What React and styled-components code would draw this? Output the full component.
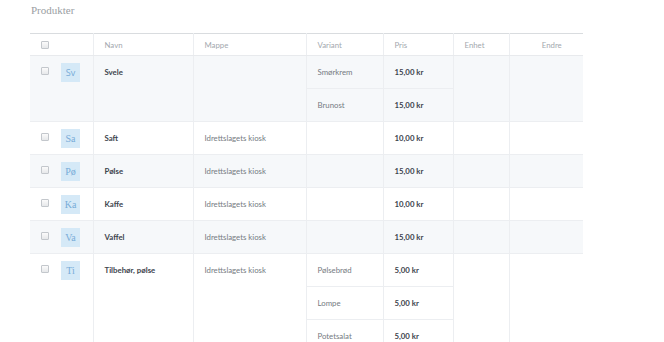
import React from "react"
import styled, { createGlobalStyle } from "styled-components"

const GlobalStyle = createGlobalStyle`
    body {
        margin: 0;
        background: #ffffff;
        font-family: "Lato", "Open Sans", sans-serif;
    }
`

const Page = styled.div`
    padding: 3px 0 0 30px;
    width: 553px;
`

const Title = styled.h2`
    margin: 0 0 16px 1px;
    font-family: "Liberation Serif", "DejaVu Serif", serif;
    font-weight: normal;
    font-size: 11px;
    line-height: 14px;
    color: #9a9ea3;
`

const Table = styled.table`
    width: 100%;
    border-collapse: collapse;
    table-layout: fixed;
    border-top: 1px solid #d9dcdf;
`

const HeadCell = styled.th`
    height: 21px;
    padding: 0 0 0 11px;
    text-align: ${props => (props.center ? "center" : "left")};
    font-size: 7.8px;
    font-weight: normal;
    color: #a3a8ae;
    border-left: ${props => (props.first ? "none" : "1px solid #eceef1")};
    border-bottom: 1px solid #e8eaed;
`

const Row = styled.tr`
    background: ${props => (props.striped ? "#f6f8fa" : "#ffffff")};
`

const Cell = styled.td`
    height: 32px;
    padding: ${props => (props.first ? "0" : "0 0 0 11px")};
    vertical-align: top;
    font-size: 7.8px;
    line-height: 32px;
    color: #757b82;
    border-left: ${props => (props.first ? "none" : "1px solid #eceef1")};
    border-bottom: 1px solid #eceef1;
`

const Name = styled.span`
    font-weight: bold;
    color: #3d444d;
`

const Price = styled.span`
    font-weight: bold;
    color: #3d444d;
`

const Lead = styled.div`
    display: flex;
    align-items: flex-start;
    height: 32px;
    padding: 7px 0 0 11px;
    box-sizing: border-box;
    gap: 12px;
`

const Check = styled.span`
    display: block;
    width: 6px;
    height: 6px;
    margin-top: ${props => props.top || 0}px;
    border: 1px solid #c3c7cc;
    border-radius: 1px;
    background: linear-gradient(#fbfbfb, #e6e8ea);
`

const Avatar = styled.span`
    display: flex;
    align-items: center;
    justify-content: center;
    width: 19px;
    height: 19px;
    background: #d5e9f7;
    color: #78acd8;
    font-size: ${props => (props.sans ? "9px" : "10px")};
    line-height: 1;
    font-family: ${props =>
        props.sans
            ? `"Open Sans", sans-serif`
            : `"Liberation Serif", "DejaVu Serif", serif`};
`

const products = [
    { short: "Sv", sans: true, name: "Svele", folder: "", variants: [["Smørkrem", "15,00 kr"], ["Brunost", "15,00 kr"]] },
    { short: "Sa", name: "Saft", folder: "Idrettslagets kiosk", variants: [["", "10,00 kr"]] },
    { short: "Pø", name: "Pølse", folder: "Idrettslagets kiosk", variants: [["", "15,00 kr"]] },
    { short: "Ka", name: "Kaffe", folder: "Idrettslagets kiosk", variants: [["", "10,00 kr"]] },
    { short: "Va", name: "Vaffel", folder: "Idrettslagets kiosk", variants: [["", "15,00 kr"]] },
    {
        short: "Ti",
        name: "Tilbehør, pølse",
        folder: "Idrettslagets kiosk",
        variants: [["Pølsebrød", "5,00 kr"], ["Lompe", "5,00 kr"], ["Potetsalat", "5,00 kr"]],
    },
]

const ProductRows = ({ product, striped }) => {
    const span = product.variants.length
    return product.variants.map(([variant, price], i) => (
        <Row striped={striped} key={i}>
            {i === 0 && (
                <>
                    <Cell first rowSpan={span}>
                        <Lead>
                            <Check top={4} />
                            <Avatar sans={product.sans}>{product.short}</Avatar>
                        </Lead>
                    </Cell>
                    <Cell rowSpan={span}>
                        <Name>{product.name}</Name>
                    </Cell>
                    <Cell rowSpan={span}>{product.folder}</Cell>
                </>
            )}
            <Cell>{variant}</Cell>
            <Cell>
                <Price>{price}</Price>
            </Cell>
            {i === 0 && (
                <>
                    <Cell rowSpan={span} />
                    <Cell rowSpan={span} />
                </>
            )}
        </Row>
    ))
}

const App = () => (
    <Page>
        <GlobalStyle />
        <Title>Produkter</Title>
        <Table>
            <colgroup>
                <col style={{ width: 63 }} />
                <col style={{ width: 100 }} />
                <col style={{ width: 113 }} />
                <col style={{ width: 77 }} />
                <col style={{ width: 70 }} />
                <col style={{ width: 56 }} />
                <col style={{ width: 74 }} />
            </colgroup>
            <thead>
                <tr>
                    <HeadCell first>
                        <Check />
                    </HeadCell>
                    <HeadCell>Navn</HeadCell>
                    <HeadCell>Mappe</HeadCell>
                    <HeadCell>Variant</HeadCell>
                    <HeadCell>Pris</HeadCell>
                    <HeadCell>Enhet</HeadCell>
                    <HeadCell center>Endre</HeadCell>
                </tr>
            </thead>
            <tbody>
                {products.map((p, i) => (
                    <ProductRows product={p} striped={i % 2 === 0} key={p.name} />
                ))}
            </tbody>
        </Table>
    </Page>
)

export default App
